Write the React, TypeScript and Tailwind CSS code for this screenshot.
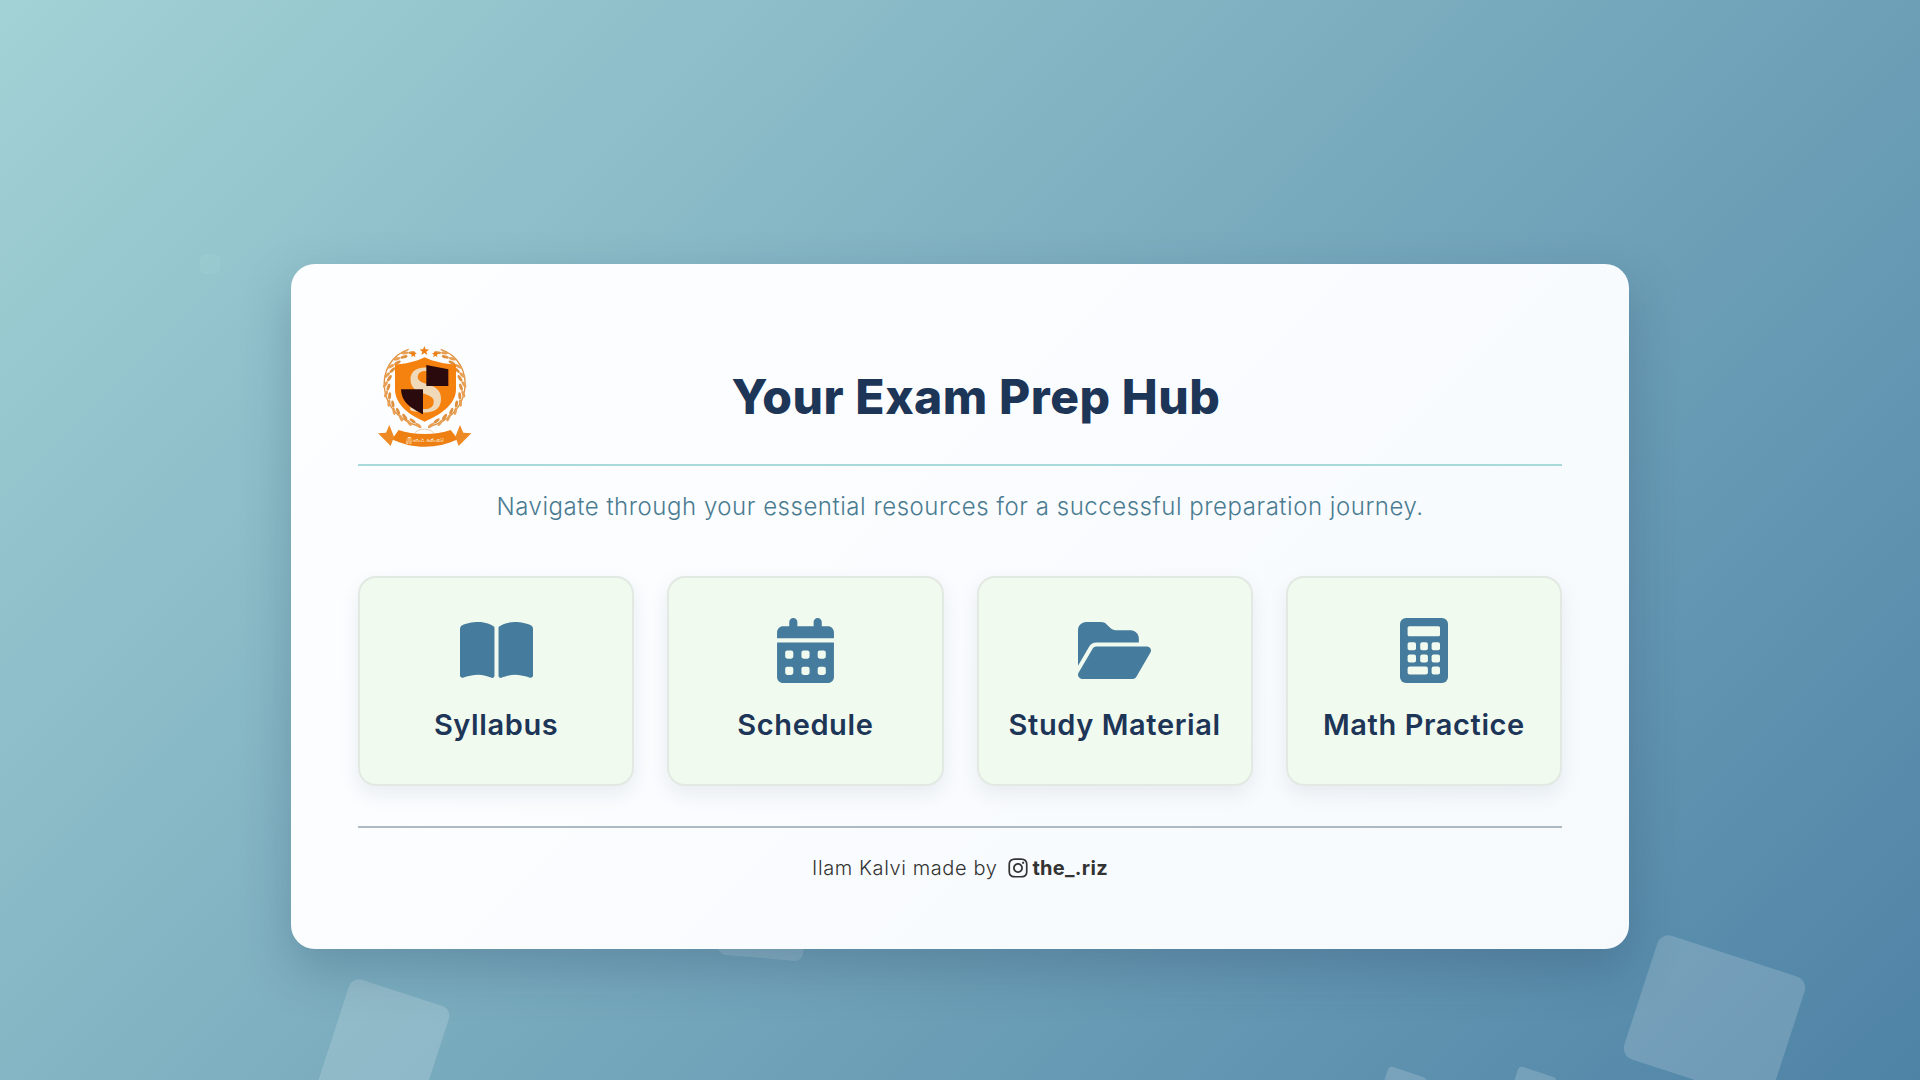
import { FaBookOpen, FaCalendarDays, FaFolderOpen, FaInstagram } from 'react-icons/fa6'

// the calculator in the picture has square keys, which the icon packs don't offer
function CalculatorIcon({ className }: { className?: string }) {
  const keys = [
    [7.6, 24.3, 8.4, 8], [20.2, 24.3, 7.7, 8], [31.6, 24.3, 8.4, 8],
    [7.6, 36.5, 8.4, 8], [20.2, 36.5, 7.7, 8], [31.6, 36.5, 8.4, 8],
    [7.6, 48.4, 20.3, 8.2], [31.6, 48.4, 8.4, 8.2],
  ]
  return (
    <svg viewBox="0 0 48 65" className={className}>
      <rect width="48" height="65" rx="6" fill="#457b9d" />
      <rect x="7.6" y="8.3" width="32.4" height="10" rx="1.5" fill="#f1faee" />
      {keys.map(([x, y, w, h]) => (
        <rect key={`${x}-${y}`} x={x} y={y} width={w} height={h} rx="2" fill="#f1faee" />
      ))}
    </svg>
  )
}

const TILES = [
  { label: 'Syllabus', Icon: FaBookOpen, size: 'w-[73px] h-[65px]' },
  { label: 'Schedule', Icon: FaCalendarDays, size: 'w-[65px] h-[65px]' },
  { label: 'Study Material', Icon: FaFolderOpen, size: 'w-[73px] h-[65px]' },
  { label: 'Math Practice', Icon: CalculatorIcon, size: 'w-[48px] h-[65px]' },
]

// wreath leaves: angle in degrees round the shield, both sides mirrored
const LEAVES = [-64, -50, -36, -22, -8, 6, 20, 34, 48, 62, 76]

function star(cx: number, cy: number, r: number) {
  const pts: string[] = []
  for (let i = 0; i < 10; i++) {
    const rad = i % 2 === 0 ? r : r * 0.42
    const a = (Math.PI / 5) * i - Math.PI / 2
    pts.push(`${cx + rad * Math.cos(a)},${cy + rad * Math.sin(a)}`)
  }
  return pts.join(' ')
}

function Logo() {
  return (
    <svg viewBox="0 0 480 420" className="w-[160px] h-[140px]">
      {[-1, 1].map(side => (
        <g key={side} transform={`translate(224 200) scale(${side} 1)`}>
          <path d="M48 -112 C100 -95 128 -45 120 10 C112 65 70 105 14 120" fill="none" stroke="#e0913f" strokeWidth="4" />
          {LEAVES.map(a => {
            const r = (a * Math.PI) / 180
            const x = 113 * Math.cos(r)
            const y = 113 * Math.sin(r)
            return (
              <g key={a} transform={`translate(${x} ${y}) rotate(${a + 65})`}>
                <ellipse cx="-11" cy="0" rx="11" ry="4.5" fill="#e0913f" />
                <ellipse cx="11" cy="0" rx="11" ry="4.5" fill="#e8a055" />
              </g>
            )
          })}
        </g>
      ))}
      <polygon points={star(223, 93, 15)} fill="#ee7f12" />
      <polygon points={star(190, 103, 11)} fill="#ee7f12" />
      <polygon points={star(256, 103, 11)} fill="#ee7f12" />
      <path d="M224 112 C250 125 285 133 318 133 L318 210 C316 255 270 285 224 305 C178 285 137 255 135 210 L135 133 C165 133 198 125 224 112 Z" fill="#f5810f" />
      <text x="226" y="276" textAnchor="middle" fontFamily="Liberation Serif, serif" fontWeight="700" fontSize="200" fill="#f0d9b8">S</text>
      <path d="M229 135 L295 148 L295 198 L229 198 Z" fill="#2b0a0d" />
      <path d="M153 208 L219 208 L219 283 C185 265 155 250 153 208 Z" fill="#2b0a0d" />
      <path d="M195 338 C210 324 236 324 251 338" fill="none" stroke="#e6c7a5" strokeWidth="2.5" />
      <path d="M146 330 C190 346 258 346 302 330 L324 358 C260 388 188 388 126 358 Z" fill="#ee7f12" />
      <path d="M118 315 L132 350 L122 378 L84 340 L108 338 Z" fill="#ee8a25" />
      <path d="M330 315 L316 350 L326 378 L364 340 L340 338 Z" fill="#ee8a25" />
      <text x="225" y="367" textAnchor="middle" fontSize="20" fill="#fdeedd" fontFamily="Noto Sans, sans-serif">இளம் கல்வி</text>
    </svg>
  )
}

export default function App() {
  return (
    <div className="relative h-screen overflow-hidden bg-[linear-gradient(135deg,#a2d2d5,#4f83a6)] flex justify-center pt-[264px] font-['Inter',sans-serif]">
      {/* floating shapes behind the card */}
      <div className="absolute left-[331px] top-[990px] w-[105px] h-[120px] rounded-[10px] bg-white/[0.17] rotate-[18deg]" />
      <div className="absolute left-[1637px] top-[953px] w-[155px] h-[130px] rounded-[12px] bg-white/[0.17] rotate-[18deg]" />
      <div className="absolute left-[720px] top-[900px] w-[85px] h-[58px] rounded-[8px] bg-white/15 rotate-[5deg]" />
      <div className="absolute left-[1382px] top-[1071px] w-[40px] h-[40px] rounded-[4px] bg-white/[0.17] rotate-[18deg]" />
      <div className="absolute left-[1512px] top-[1071px] w-[40px] h-[40px] rounded-[4px] bg-white/[0.17] rotate-[18deg]" />
      <div className="absolute left-[200px] top-[254px] w-[20px] h-[20px] rounded-[6px] bg-[#a8dadc]/20" />

      <div className="relative w-[1338px] h-[685px] rounded-[24px] bg-[linear-gradient(135deg,#fdfeff,#f6fafd)] shadow-[0_20px_50px_rgba(29,53,87,0.25)] px-[67px] pt-[76px] flex flex-col">
        <div className="relative flex items-center justify-center h-[126px] border-b-2 border-[#a8dadc]">
          <div className="absolute left-[-8px] top-[-20px]">
            <Logo />
          </div>
          <h1 className="pl-[32px] pb-[10px] text-[48px] font-extrabold tracking-[0.55px] text-[#1d3557]">Your Exam Prep Hub</h1>
        </div>

        <p className="mt-[23px] text-center text-[24px] font-light leading-[36px] text-[#4a7b91] tracking-[0.53px]">
          Navigate through your essential resources for a successful preparation journey.
        </p>

        <div className="mt-[51px] grid grid-cols-4 gap-[33px]">
          {TILES.map(({ label, Icon, size }) => (
            <div
              key={label}
              className="h-[210px] rounded-[18px] border-2 border-[#e2e9e3] bg-[#f1faee] shadow-[0_8px_20px_rgba(29,53,87,0.08)] flex flex-col items-center pt-[40px]"
            >
              <Icon className={`${size} text-[#457b9d]`} />
              <span className="mt-[21px] text-[29px] leading-[42px] font-semibold text-[#1d3557] tracking-[0.6px]">{label}</span>
            </div>
          ))}
        </div>

        <div className="mt-[40px] border-t-2 border-[#adbac2] pt-[25px] flex items-center justify-center text-[20px] leading-[30px] font-light text-[#333333]">
          <span className="tracking-[0.6px]">Ilam Kalvi made by</span>
          <FaInstagram className="ml-[11px] w-[20px] h-[22px]" />
          <span className="ml-[4px] font-bold tracking-[0.3px]">the_.riz</span>
        </div>
      </div>
    </div>
  )
}
